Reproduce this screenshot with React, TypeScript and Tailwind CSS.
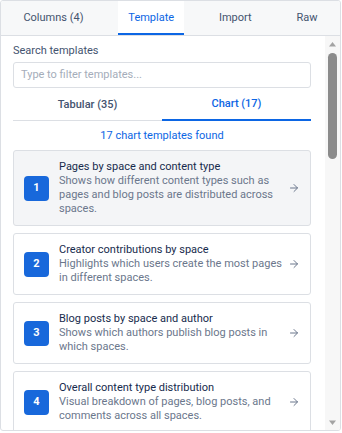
import React from "react";

const templates = [
  { t: "Pages by space and content type", d: "Shows how different content types such as pages and blog posts are distributed across spaces." },
  { t: "Creator contributions by space", d: "Highlights which users create the most pages in different spaces." },
  { t: "Blog posts by space and author", d: "Shows which authors publish blog posts in which spaces." },
  { t: "Overall content type distribution", d: "Visual breakdown of pages, blog posts, and comments across all spaces." },
];

function Arrow() {
  return (
    <svg width="12" height="12" viewBox="0 0 24 24" fill="none" stroke="currentColor" strokeWidth="2" strokeLinecap="round" strokeLinejoin="round">
      <path d="M5 12h14" />
      <path d="m12 5 7 7-7 7" />
    </svg>
  );
}

function ScrollBar() {
  return (
    <div className="w-[15px] shrink-0 bg-[#f7f7f7] flex flex-col items-center">
      <div className="h-[15px] flex items-center justify-center">
        <svg width="9" height="6" viewBox="0 0 9 6"><path d="M4.5 1 L8 5.5 L1 5.5 Z" fill="#a3a3a3" /></svg>
      </div>
      <div className="mt-[2px] w-[9px] h-[106px] rounded-full bg-[#8b8b8b]" />
      <div className="flex-1" />
      <div className="h-[15px] flex items-center justify-center">
        <svg width="9" height="6" viewBox="0 0 9 6"><path d="M1 0.5 L8 0.5 L4.5 5 Z" fill="#a3a3a3" /></svg>
      </div>
    </div>
  );
}

export default function App() {
  return (
    <div className="w-[341px] h-[431px] border border-[#dcdfe4] rounded-[3px] bg-white flex flex-col overflow-hidden text-[11px] leading-[14px]" style={{ fontFamily: "Roboto, 'Noto Sans', sans-serif" }}>
      <div className="h-[35px] shrink-0 flex justify-around bg-[#f7f8f9] border-b border-[#dcdfe4]">
        <div className="px-[10px] flex items-center text-[#44546f]">Columns (4)</div>
        <div className="px-[10px] flex items-center bg-white text-[#0c66e4] border-b-2 border-[#0c66e4] pt-[2px]">Template</div>
        <div className="px-[10px] flex items-center text-[#44546f]">Import</div>
        <div className="px-[10px] flex items-center text-[#44546f]">Raw</div>
      </div>
      <div className="flex-1 flex min-h-0">
        <div className="flex-1 overflow-hidden pl-3 pr-[14px] pt-[8px]">
          <div className="text-[#44546f] mb-[4px]">Search templates</div>
          <div className="h-[26px] border border-[#dcdfe4] rounded-[3px] px-[7px] flex items-center text-[#a5adba]">Type to filter templates...</div>
          <div className="flex mt-[5px] border-b border-[#dcdfe4]">
            <div className="flex-1 text-center font-medium text-[#44546f] pt-[5px] pb-[8px]">Tabular (35)</div>
            <div className="flex-1 text-center font-medium text-[#0c66e4] pt-[4px] pb-[7px] border-b-2 border-[#0c66e4] -mb-px">Chart (17)</div>
          </div>
          <div className="text-center text-[#0c66e4] mt-[8px] mb-[7px]">17 chart templates found</div>
          <div className="flex flex-col gap-[7px]">
            {templates.map((x, i) => (
              <div key={i} className={`flex items-center border border-[#dcdfe4] rounded-[3px] pl-[10px] pr-[10px] py-[9px] ${i === 0 ? "bg-[#f4f5f7]" : "bg-white"}`}>
                <div className="w-[25px] h-[25px] shrink-0 rounded-[4px] bg-[#1868db] text-white font-bold flex items-center justify-center">{i + 1}</div>
                <div className="flex-1 ml-[10px] min-w-0">
                  <div className="text-[#172b4d]">{x.t}</div>
                  <div className="text-[#6b778c]">{x.d}</div>
                </div>
                <div className="ml-[4px] text-[#6b778c] shrink-0"><Arrow /></div>
              </div>
            ))}
          </div>
        </div>
        <ScrollBar />
      </div>
    </div>
  );
}
